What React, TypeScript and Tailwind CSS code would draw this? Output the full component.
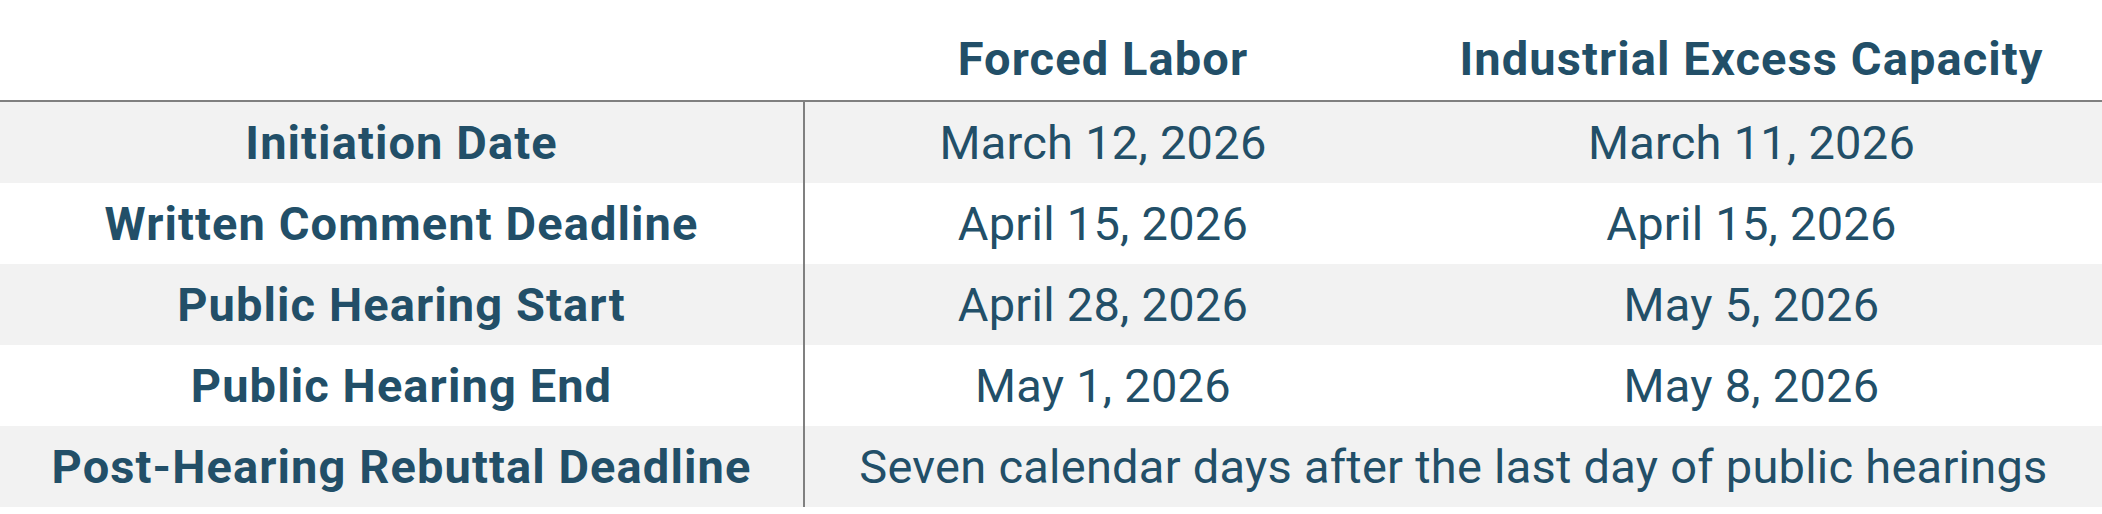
import React from "react";

const rows: { label: string; a: string; b?: string; shade: boolean }[] = [
  { label: "Initiation Date", a: "March 12, 2026", b: "March 11, 2026", shade: true },
  { label: "Written Comment Deadline", a: "April 15, 2026", b: "April 15, 2026", shade: false },
  { label: "Public Hearing Start", a: "April 28, 2026", b: "May 5, 2026", shade: true },
  { label: "Public Hearing End", a: "May 1, 2026", b: "May 8, 2026", shade: false },
  { label: "Post-Hearing Rebuttal Deadline", a: "Seven calendar days after the last day of public hearings", shade: true },
];

export default function App() {
  return (
    <div
      className="w-[2102px] h-[514px] bg-white text-[#224f68] text-[47px] leading-none tracking-[0.25px]"
      style={{ fontFamily: "Roboto, 'Liberation Sans', sans-serif" }}
    >
      <div className="grid grid-cols-[805px_596px_701px] h-[100px] font-bold tracking-[1.1px]">
        <div />
        <div className="flex items-center justify-center pt-[16px]">Forced Labor</div>
        <div className="flex items-center justify-center pt-[16px]">Industrial Excess Capacity</div>
      </div>
      <div className="h-[2px] bg-[#808080]" />
      {rows.map((r) => (
        <div
          key={r.label}
          className={`grid grid-cols-[805px_596px_701px] h-[81px] ${r.shade ? "bg-[#f2f2f2]" : "bg-white"}`}
        >
          <div className="flex items-center justify-center font-bold tracking-[1.1px] border-r-2 border-[#808080]">
            {r.label}
          </div>
          {r.b ? (
            <>
              <div className="flex items-center justify-center">{r.a}</div>
              <div className="flex items-center justify-center">{r.b}</div>
            </>
          ) : (
            <div className="col-span-2 flex items-center justify-center">{r.a}</div>
          )}
        </div>
      ))}
    </div>
  );
}
